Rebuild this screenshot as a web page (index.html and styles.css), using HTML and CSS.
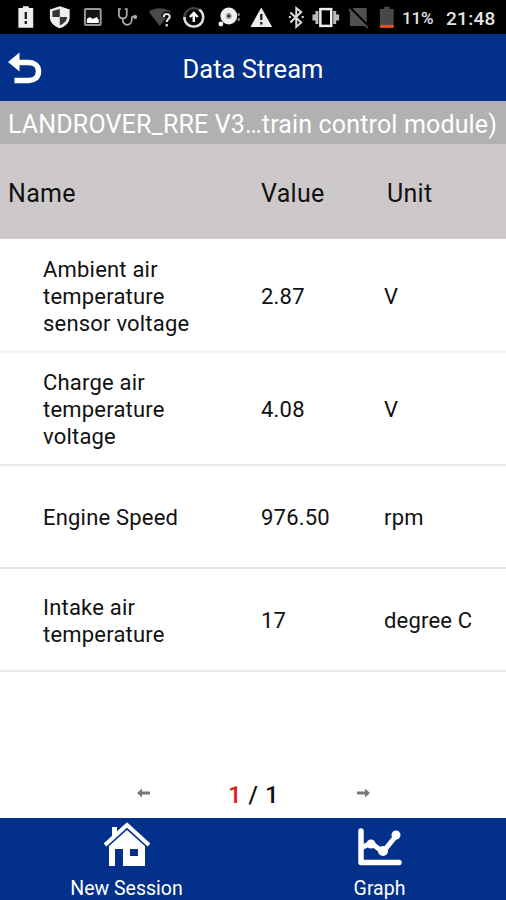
FILE: index.html
```html
<!DOCTYPE html>
<html lang="en">
<head>
    <meta charset="UTF-8">
    <meta name="viewport" content="width=device-width, initial-scale=1.0">
    <title>Data Stream</title>
    <link rel="stylesheet" href="styles.css">
</head>
<body>
    <!-- Phone status bar -->
    <div class="status-bar">
        <div class="status-icons">
            <svg viewBox="0 0 34 34"><path fill="#eee" d="M10 8h4V6h6v2h4.500v20H9.500V8z"/><path stroke="#222" stroke-width="2.400" d="M17 12v7M17 21v3"/></svg>
            <svg viewBox="0 0 34 34"><path fill="#eee" d="M17 6l10 3.500v8c0 5-4 9-10 11-6-2-10-6-10-11v-8z"/><path fill="#333" d="M17 9v8h7.500c-.5 4-3 6.500-7.500 8.500V17H9.500v-6z"/></svg>
            <svg viewBox="0 0 34 34"><rect x="9" y="9" width="16" height="16" rx="1" fill="#111" stroke="#999" stroke-width="2"/><path fill="#fff" d="M11 23v-4l3-2 3 2 4-2 2 3v3z"/></svg>
            <svg viewBox="0 0 34 34"><path fill="none" stroke="#aaa" stroke-width="1.800" d="M11 9H9v5c0 6 8 6 8 0V9h-2M13 18v2c0 7 9 6 9 0v-2c0-2 4-2 4-1"/><circle cx="25.500" cy="17" r="2" fill="#aaa"/></svg>
            <svg viewBox="0 0 34 34"><path fill="#4a4a4a" d="M6 12c6-5 16-5 22 0L17 26z"/><path fill="none" stroke="#000" stroke-width="5" d="M21 17c0-4 6-4 6 0 0 2-3 2-3 5v4"/><path fill="none" stroke="#ddd" stroke-width="2.200" d="M21 17c0-4 6-4 6 0 0 2-3 2-3 5M24 24v2.500"/></svg>
            <svg viewBox="0 0 34 34"><circle cx="17" cy="17.500" r="9.500" fill="none" stroke="#444" stroke-width="2.400"/><path fill="none" stroke="#ddd" stroke-width="2.500" d="M7.500 17c0 13 19 13 19 0 0-4-2-6-4-7.500"/><path fill="none" stroke="#fff" stroke-width="2.500" d="M17 22v-8M13 17l4-4 4 4"/></svg>
            <svg viewBox="0 0 34 34"><circle cx="18" cy="16" r="8.500" fill="#eee"/><circle cx="18" cy="16" r="3" fill="#999"/><circle cx="18" cy="16" r="1.200" fill="#111"/><circle cx="10" cy="24" r="2.500" fill="#eee"/><path stroke="#888" stroke-width="2" d="M28 13v3M28 18v3"/></svg>
            <svg viewBox="0 0 34 34"><path fill="#eee" d="M17.500 7.500L28.500 27H6.500z"/><path stroke="#222" stroke-width="2.400" d="M17.500 14v6M17.500 22v2.500"/></svg>
            <svg viewBox="0 0 34 34"><path fill="none" stroke="#ddd" stroke-width="2" d="M12.500 12.500l11 10-5 4.500V8l5 4-11 10.500"/><path fill="#ddd" d="M11 16h2v2h-2zM24 16h2v2h-2z"/></svg>
            <svg class="vibrate" viewBox="0 0 34 34"><rect x="11.500" y="9" width="11" height="17" fill="none" stroke="#eee" stroke-width="2.500"/><path stroke="#bbb" stroke-width="3" d="M8 11v13M26 11v13M5 14.500v6M29 14.500v6"/></svg>
            <svg class="sim" viewBox="0 0 34 34"><path fill="#505050" d="M9 11l4-3h13v18H9z"/><path stroke="#000" stroke-width="3" d="M8 7l20 20"/><path stroke="#555" stroke-width="1.800" d="M8 9l19 19"/></svg>
            <svg class="battery" viewBox="0 0 34 34"><path fill="#484848" d="M10 9h4V6.500h6V9h4v16H10z"/><path fill="#e8502c" d="M10 25h14v3H10z"/></svg>
        </div>
        <span class="battery-level">11%</span>
        <span class="clock">21:48</span>
    </div>

    <div class="header">
        <button class="back-btn" aria-label="Back">
            <svg viewBox="0 0 36 36" width="36" height="36"><path fill="#fff" d="M0 12L11.500 2.500v19z"/><path fill="none" stroke="#fff" stroke-width="5.500" d="M9 12.500h12c5 0 9.500 3 9.500 9s-4.500 9-9.500 9H6.500"/></svg>
        </button>
        <h1>Data Stream</h1>
    </div>
    <div class="vehicle">LANDROVER_RRE V3…train control module)</div>

    <div class="row table-head">
        <div class="name">Name</div>
        <div class="value">Value</div>
        <div class="unit">Unit</div>
    </div>
    <div class="row first tall">
        <div class="name">Ambient air temperature sensor voltage</div>
        <div class="value">2.87</div>
        <div class="unit">V</div>
    </div>
    <div class="row tall">
        <div class="name">Charge air temperature voltage</div>
        <div class="value">4.08</div>
        <div class="unit">V</div>
    </div>
    <div class="row">
        <div class="name">Engine Speed</div>
        <div class="value">976.50</div>
        <div class="unit">rpm</div>
    </div>
    <div class="row">
        <div class="name">Intake air temperature</div>
        <div class="value">17</div>
        <div class="unit">degree C</div>
    </div>

    <!-- Paging -->
    <div class="pager">
        <svg viewBox="0 0 14 10" width="14" height="10"><path fill="#777" d="M0 5l5-4.500v3h8v3H5v3z"/></svg>
        <div class="pages"><span class="current">1</span> / 1</div>
        <svg viewBox="0 0 14 10" width="14" height="10"><path fill="#777" d="M14 5L9 .5v3H1v3h8v3z"/></svg>
    </div>

    <div class="footer">
        <div class="tab">
            <svg viewBox="0 0 48 48" width="48" height="48"><path fill="#fff" d="M6 25L24 9l18 16v21H20V29h-8v17H6z"/><path fill="#fff" d="M9 7h5v8l-5 4z"/><path fill="none" stroke="#02308a" stroke-width="1.500" d="M4 27L24 9l20 18"/><path fill="none" stroke="#fff" stroke-width="4" d="M2 25L24 5l22 20"/><path fill="#02308a" d="M27 29h8v7h-8z"/></svg>
            <span>New Session</span>
        </div>
        <div class="tab">
            <svg viewBox="0 0 48 48" width="48" height="48"><g fill="none" stroke="#fff" stroke-linecap="round" stroke-linejoin="round"><path stroke-width="5.500" d="M5 11v31.500h38"/><path stroke-width="5" d="M7 27l8-4 12 9L40 16"/></g><g fill="#fff"><circle cx="15" cy="24" r="4.500"/><circle cx="27" cy="31" r="5"/><circle cx="40" cy="15" r="4.500"/></g></svg>
            <span>Graph</span>
        </div>
    </div>
</body>
</html>
```
FILE: styles.css
```css
* {
    box-sizing: border-box;
    margin: 0;
    padding: 0;
}
body {
    display: flex;
    flex-direction: column;
    height: 900px;
    font-family: Roboto, sans-serif;
    background-color: #fff;
    color: #111;
    overflow: hidden;
}
.status-bar {
    display: flex;
    align-items: center;
    height: 34px;
    padding-left: 9px;
    background-color: #000;
    color: #e4e4e4;
    white-space: nowrap;
}
.status-icons {
    display: flex;
    width: 393px;
}
.status-icons svg {
    flex: none;
    width: 33.6px;
    height: 34px;
}
.status-icons .vibrate {
    margin-left: -2.500px;
}
.status-icons .sim {
    margin-left: -1px;
}
.status-icons .battery {
    margin-left: -5px;
}
.battery-level {
    width: 44px;
    padding-top: 2px;
    font-size: 17px;
    font-weight: 500;
    letter-spacing: -0.2px;
}
.clock {
    padding-top: 2px;
    font-size: 19px;
    font-weight: 500;
    letter-spacing: 0.3px;
}
.header {
    display: grid;
    grid-template-columns: 60px 1fr 60px;
    align-items: center;
    height: 67px;
    background-color: #02308a;
    color: #fff;
}
.back-btn {
    height: 36px;
    padding-left: 8px;
    background: none;
    border: none;
    text-align: left;
}
.header h1 {
    padding-top: 2px;
    font-size: 25.500px;
    font-weight: 400;
    text-align: center;
}
.vehicle {
    height: 43px;
    padding-left: 8px;
    line-height: 47px;
    background-color: #b1b1b1;
    color: #fff;
    font-size: 25px;
    letter-spacing: 0.15px;
    white-space: nowrap;
}
.row {
    display: grid;
    grid-template-columns: 218px 123px 1fr;
    align-items: center;
    height: 103px;
    padding-top: 2px;
    padding-left: 43px;
    border-bottom: 2px solid #e9e9e9;
    font-size: 22px;
    line-height: 27px;
    letter-spacing: 0.2px;
}
.row .name {
    width: 160px;
}
.row.tall {
    height: 113px;
}
.row.first {
    height: 114px;
    padding-top: 4px;
    border-bottom: 3px solid #f5f5f5;
}
.row.table-head {
    grid-template-columns: 253px 126px 1fr;
    height: 95px;
    padding-top: 4px;
    padding-left: 8px;
    border-bottom: none;
    background-color: #cdc9ca;
    font-size: 25px;
    letter-spacing: 0.3px;
}
.pager {
    display: flex;
    align-items: center;
    justify-content: space-between;
    width: 233px;
    height: 50px;
    margin-top: auto;
    margin-left: 137px;
}
.pages {
    padding-top: 3px;
    font-size: 24px;
    font-weight: 500;
    letter-spacing: 0.5px;
}
.current {
    color: #dd1c1c;
}
.footer {
    display: grid;
    grid-template-columns: 1fr 1fr;
    height: 82px;
    background-color: #02308a;
    color: #fff;
}
.tab {
    display: flex;
    flex-direction: column;
    align-items: center;
    padding-top: 2px;
    font-size: 19.500px;
    line-height: 24px;
}
.tab span {
    margin-top: 9px;
}
```
